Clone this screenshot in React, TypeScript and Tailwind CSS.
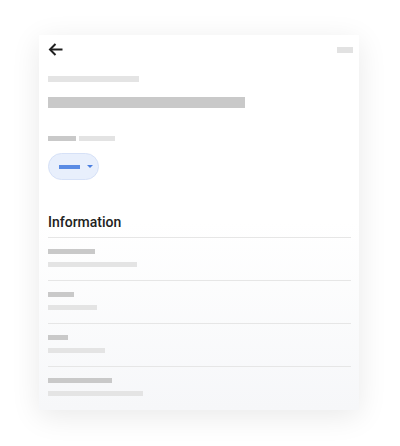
import React from 'react';

const rows = [
  { label: 47, sub: 89 },
  { label: 26, sub: 49 },
  { label: 20, sub: 57 },
  { label: 64, sub: 95 },
];

const App: React.FC = () => {
  return (
    <div className="w-[400px] h-[446px] bg-white pt-[35px] pl-[39px]" style={{ fontFamily: 'Roboto, "Liberation Sans", sans-serif' }}>
      <div className="w-[320px] h-[375px] bg-gradient-to-b from-white via-white to-[#f6f7f9] shadow-[0_6px_28px_rgba(0,0,0,0.09)] flex flex-col">
        {/* header */}
        <div className="flex items-center justify-between h-[29px] pl-[9px] pr-[6px]">
          <svg width="15" height="13" viewBox="0 0 15 13" fill="none">
            <path d="M14.5 6.5H2.2" stroke="#1f1f1f" strokeWidth="2" />
            <path d="M7.5 1L2 6.5L7.5 12" stroke="#1f1f1f" strokeWidth="2" />
          </svg>
          <div className="w-[16px] h-[6px] bg-[#e2e2e2]" />
        </div>

        <div className="pl-[9px] flex flex-col">
          <div className="mt-[12px] w-[91px] h-[6px] bg-[#e4e4e4]" />
          <div className="mt-[15px] w-[197px] h-[11px] bg-[#c9c9c9]" />
          <div className="mt-[28px] flex gap-[3px]">
            <div className="w-[28px] h-[5px] bg-[#c9c9c9]" />
            <div className="w-[36px] h-[5px] bg-[#e3e3e3]" />
          </div>
          <div className="mt-[12px] w-[51px] h-[27px] rounded-full bg-[#e8effc] border border-[#d6e1f7] flex items-center pl-[10px] gap-[7px]">
            <div className="w-[21px] h-[4px] bg-[#5a8be4]" />
            <div className="w-0 h-0 border-l-[3px] border-r-[3px] border-t-[3px] border-l-transparent border-r-transparent border-t-[#4a7fe0]" />
          </div>
          <div className="mt-[32px] text-[14px] leading-[20px] font-medium text-[#222]">Information</div>
        </div>

        <div className="mt-[5px] pl-[9px] pr-[8px] flex flex-col">
          {rows.map((r, i) => (
            <div key={i} className="flex flex-col">
              <div className="h-px bg-[#e6e6e6]" />
              <div className="pt-[11px] pb-[13px] flex flex-col gap-[8px]">
                <div className="h-[5px] bg-[#c9c9c9]" style={{ width: r.label }} />
                <div className="h-[5px] bg-[#e4e4e4]" style={{ width: r.sub }} />
              </div>
            </div>
          ))}
        </div>
      </div>
    </div>
  );
};

export default App;
